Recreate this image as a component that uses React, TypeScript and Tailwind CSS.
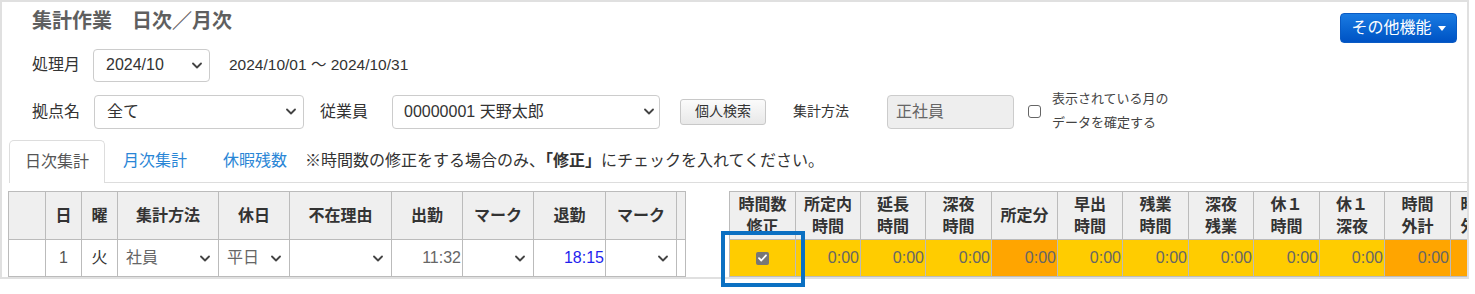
import React from 'react';

const Chevron = ({ className = '' }: { className?: string }) => (
  <svg width="10" height="7" viewBox="0 0 10 7" className={className}>
    <path d="M1 1.5l4 4 4-4" fill="none" stroke="#444" strokeWidth="1.8" strokeLinecap="round" strokeLinejoin="round" />
  </svg>
);

const FakeSelect = ({ value, className = '' }: { value: string; className?: string }) => (
  <div className={`flex items-center justify-between border border-[#ccc] rounded-[4px] bg-white text-[16px] text-[#333] ${className}`}>
    <span>{value}</span>
    <Chevron />
  </div>
);

const CellSelect = ({ value }: { value?: string }) => (
  <div className="flex items-center justify-between h-full pl-[8px] pr-[8px] text-[#666]">
    <span>{value}</span>
    <Chevron />
  </div>
);

const leftHeaders = ['', '日', '曜', '集計方法', '休日', '不在理由', '出勤', 'マーク', '退勤', 'マーク', ''];

const rightHeaders: string[][] = [
  ['時間数', '修正'],
  ['所定内', '時間'],
  ['延長', '時間'],
  ['深夜', '時間'],
  ['所定分'],
  ['早出', '時間'],
  ['残業', '時間'],
  ['深夜', '残業'],
  ['休１', '時間'],
  ['休１', '深夜'],
  ['時間', '外計'],
  ['時間', '外計'],
];

// orange columns: 所定分, 時間外計 and the clipped one after it
const orange = [4, 10, 11];

export default function App() {
  return (
    <div className="relative w-[1475px] h-[294px] bg-white font-['Liberation_Sans','Noto_Sans_CJK_JP',sans-serif] overflow-hidden">
      <div className="w-[1469px] h-[279px] border-2 border-[#e0e0e0] flex flex-col">
        {/* title */}
        <div className="h-[44px] flex justify-between items-start">
          <h1 className="pl-[30px] pt-[5px] text-[20px] leading-[28px] font-bold text-[#5f5f5f]">集計作業　日次／月次</h1>
          <button className="mt-[11px] mr-[10px] w-[117px] h-[30px] rounded-[4px] bg-gradient-to-b from-[#1a7be2] to-[#0052c4] border border-[#0a5bc4] text-white text-[16px] flex items-center justify-center gap-[6px]">
            その他機能
            <span className="w-0 h-0 border-l-[4px] border-r-[4px] border-t-[5px] border-l-transparent border-r-transparent border-t-white" />
          </button>
        </div>

        {/* row 1 */}
        <div className="mt-[3px] h-[33px] flex items-center pl-[30px] text-[16px] text-[#333]">
          <span className="w-[61px]">処理月</span>
          <FakeSelect value="2024/10" className="w-[117px] h-[33px] pl-[12px] pr-[7px]" />
          <span className="ml-[19px] text-[15.5px]">2024/10/01 ～ 2024/10/31</span>
        </div>

        {/* row 2 */}
        <div className="mt-[13px] h-[34px] flex items-center pl-[30px] text-[16px] text-[#333]">
          <span className="w-[62px]">拠点名</span>
          <FakeSelect value="全て" className="w-[210px] h-[34px] pl-[12px] pr-[7px]" />
          <span className="ml-[16px] w-[72px]">従業員</span>
          <FakeSelect value="00000001 天野太郎" className="w-[268px] h-[34px] pl-[11px] pr-[5px]" />
          <button className="ml-[20px] w-[86px] h-[26px] rounded-[3px] border border-[#c8c8c8] bg-gradient-to-b from-[#fbfbfb] to-[#e8e8e8] text-[14px] text-[#333]">個人検索</button>
          <span className="ml-[27px] w-[94px] text-[14px]">集計方法</span>
          <div className="w-[127px] h-[34px] border border-[#ccc] rounded-[4px] bg-[#eee] pl-[8px] flex items-center text-[#666]">正社員</div>
          <span className="ml-[14px] w-[13px] h-[13px] rounded-[3px] border border-[#666] bg-white" />
          <div className="ml-[11px] text-[13px] leading-[24px] text-[#444] -mt-[2px]">
            <div>表示されている月の</div>
            <div>データを確定する</div>
          </div>
        </div>

        {/* tabs */}
        <div className="mt-[11px] h-[44px] flex items-stretch pl-[7px] text-[16px]">
          <div className="px-[15px] flex items-center border border-[#ddd] border-b-0 rounded-t-[5px] text-[#555]">日次集計</div>
          <div className="flex-1 flex items-center border-b border-[#ddd]">
            <span className="px-[18px] text-[#2a86d6]">月次集計</span>
            <span className="px-[18px] text-[#2a86d6]">休暇残数</span>
            <span className="text-[#333]">※時間数の修正をする場合のみ、<b className="font-bold">「修正」</b>にチェックを入れてください。</span>
          </div>
        </div>

        {/* tables */}
        <div className="mt-[8px] flex pl-[6px] text-[16px]">
          <div className="grid grid-cols-[37px_36px_36px_101px_71px_102px_71px_71px_72px_71px_9px] border-l border-t border-[#bbb]">
            {leftHeaders.map((h, i) => (
              <div key={i} className="h-[48px] bg-[#efefef] border-r border-b border-[#bbb] flex items-center justify-center font-bold text-[#333]">
                {h}
              </div>
            ))}
            <div className="h-[37px] border-r border-b border-[#bbb]" />
            <div className="h-[37px] border-r border-b border-[#bbb] flex items-center justify-center text-[#555]">1</div>
            <div className="h-[37px] border-r border-b border-[#bbb] flex items-center justify-center text-[#333]">火</div>
            <div className="h-[37px] border-r border-b border-[#bbb]"><CellSelect value="社員" /></div>
            <div className="h-[37px] border-r border-b border-[#bbb]"><CellSelect value="平日" /></div>
            <div className="h-[37px] border-r border-b border-[#bbb]"><CellSelect /></div>
            <div className="h-[37px] border-r border-b border-[#bbb] flex items-center justify-end pr-[1px] text-[#666]">11:32</div>
            <div className="h-[37px] border-r border-b border-[#bbb]"><CellSelect /></div>
            <div className="h-[37px] border-r border-b border-[#bbb] flex items-center justify-end pr-[1px] text-[#1f1fee]">18:15</div>
            <div className="h-[37px] border-r border-b border-[#bbb]"><CellSelect /></div>
            <div className="h-[37px] border-r border-b border-[#bbb]" />
          </div>

          <div className="ml-[43px] flex-1 min-w-0 overflow-hidden">
            <div className="w-max grid grid-cols-[66px_65px_65px_66px_66px_65px_66px_65px_66px_65px_66px_52px] border-l border-t border-[#bbb]">
              {rightHeaders.map((lines, i) => (
                <div key={i} className="h-[48px] bg-[#efefef] border-r border-b border-[#bbb] flex flex-col items-center justify-center font-bold text-[#333] leading-[22px]">
                  {lines.map((l, j) => (
                    <span key={j}>{l}</span>
                  ))}
                </div>
              ))}
              {rightHeaders.map((_, i) =>
                i === 0 ? (
                  <div key={i} className="h-[37px] bg-[#ffcc00] border-r border-b border-[#bbb] flex items-center justify-center">
                    <span className="w-[13px] h-[13px] rounded-[2px] bg-[#777] flex items-center justify-center">
                      <svg width="9" height="8" viewBox="0 0 9 8">
                        <path d="M1 4.2l2.3 2.3L8 1.3" fill="none" stroke="#fff" strokeWidth="1.8" strokeLinecap="round" strokeLinejoin="round" />
                      </svg>
                    </span>
                  </div>
                ) : (
                  <div
                    key={i}
                    className={`h-[37px] border-r border-b border-[#bbb] flex items-center justify-end pr-[1px] text-[#666] ${
                      orange.includes(i) ? 'bg-[#ffa500]' : 'bg-[#ffcc00]'
                    }`}
                  >
                    {i === 11 ? '' : '0:00'}
                  </div>
                )
              )}
            </div>
          </div>
        </div>
      </div>

      {/* highlight box */}
      <div className="absolute left-[721px] top-[231px] w-[84px] h-[56px] border-4 border-[#0b70c2]" />
    </div>
  );
}
